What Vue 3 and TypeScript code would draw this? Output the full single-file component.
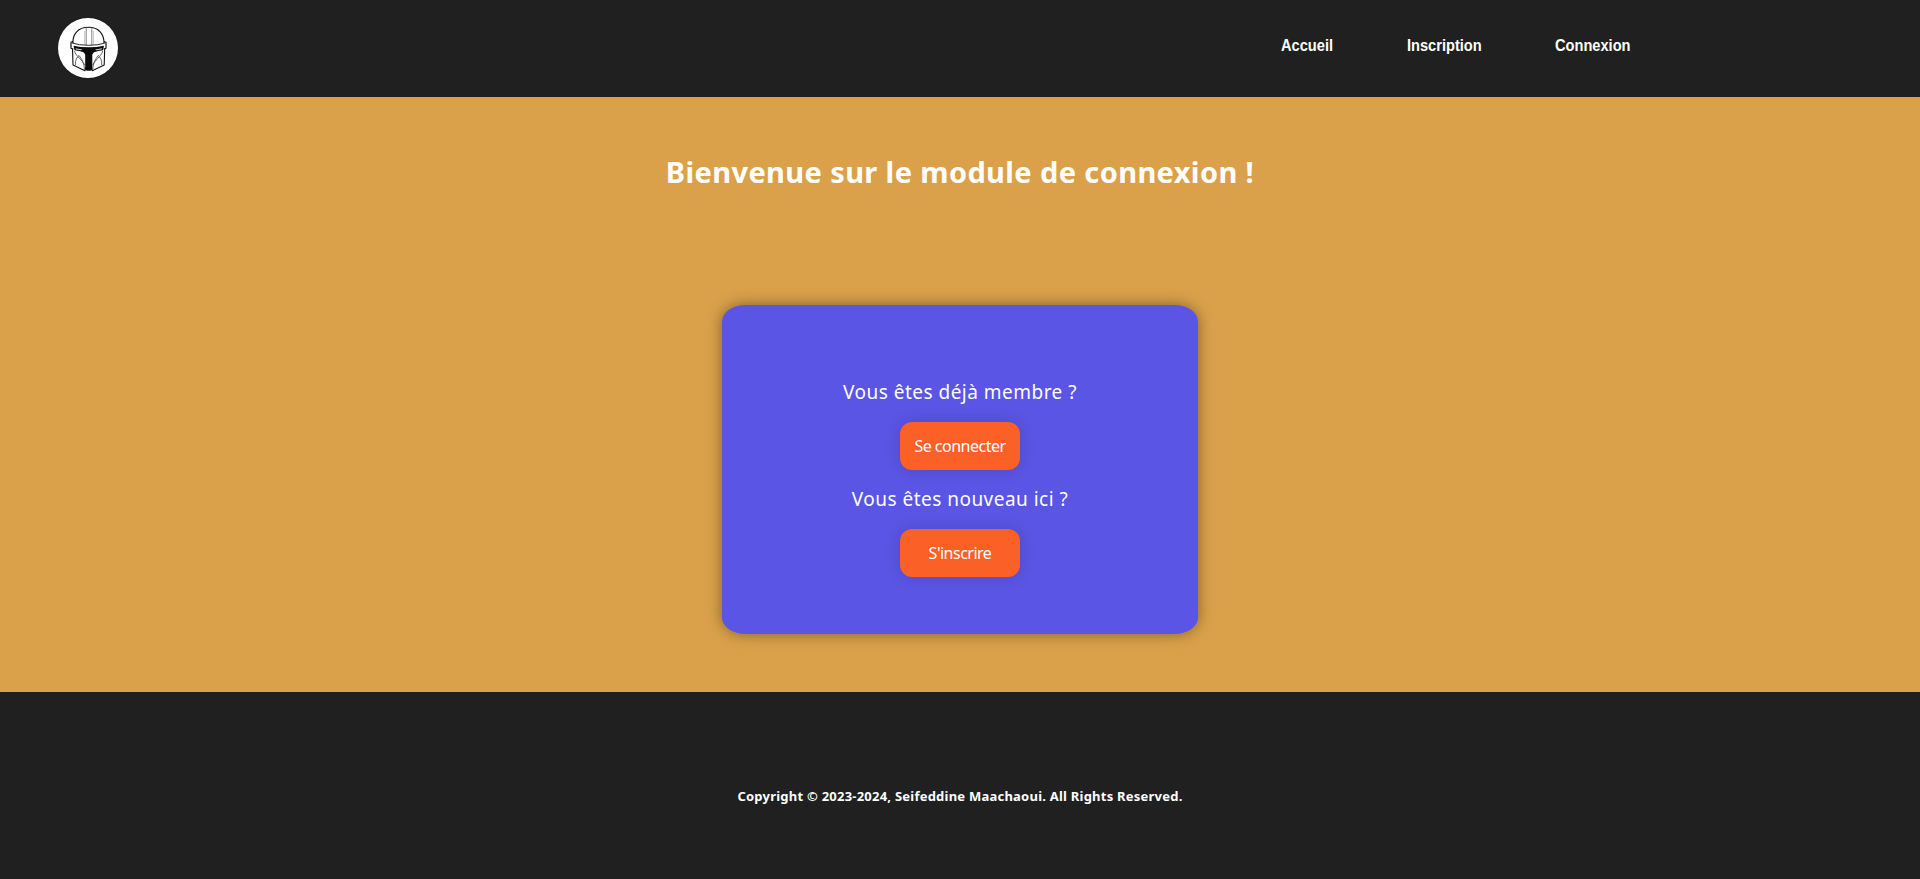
<script setup lang="ts">
interface Link {
  label: string
  cls: string
}
interface Choice {
  question: string
  action: string
}

const links: Link[] = [
  { label: 'Accueil', cls: 'home' },
  { label: 'Inscription', cls: 'register' },
  { label: 'Connexion', cls: 'login' },
]
const choices: Choice[] = [
  { question: 'Vous êtes déjà membre ?', action: 'Se connecter' },
  { question: 'Vous êtes nouveau ici ?', action: "S'inscrire" },
]
</script>

<template>
  <div class="page">
    <header class="header">
      <a class="logo" href="#" aria-label="Accueil">
        <svg viewBox="0 0 60 60" width="60" height="60">
          <circle cx="30" cy="30" r="30" fill="#fff" />
          <g fill="none" stroke="#111" stroke-width="1.1" stroke-linejoin="round">
            <path d="M15 25C14.500 16 20 9.300 30.500 9.300S46 16 46 25" />
            <path d="M28.200 9.500v17.500M33.800 9.500v17.500" stroke="#777" stroke-width="0.9" />
            <path d="M26.500 13v13M35.500 13v13" stroke="#ccc" />
            <path d="M15 23.500l-2 .8v6l2.300 1M46 23.500l2 .8v6l-2.300 1" stroke-width="1.2" />
            <path d="M14 25q7 2.300 16.700 2.300T47 25" stroke-width="0.9" />
            <path d="M14.500 30.500l.5 16.500 12 5.700.7-3M46.700 30.500l-.5 16.500-12 5.700-.7-3" />
            <path d="M16.500 33c1 4.500 5 6 10.500 14M44.700 33c-1 4.500-5 6-10 14M17.500 47c-.5-5 1.500-8 3.500-9.500 3 4 5 7 5.500 14M43.700 47c.5-5-1.500-8-3.500-9.500-3 4-5 7-5.500 14" stroke="#555" stroke-width="0.9" />
          </g>
          <path d="M15.500 27.800q7 1.500 15.200 1.500t15.300-1.500l-1 4.500q-5 .4-9 1.900l-1.700 2.300v15l-1.800 1.200h-3.600l-1.700-1.200v-15l-1.700-2.300q-4-1.500-9-1.900z" fill="#0c0c0c" />
          <path d="M17.500 30.300q4 .9 7 1.100l-1.500.8q-3-.5-5-.7zM44 30.300q-4 .9-7 1.100l1.500.8q3-.5 5-.7z" fill="#ddd" />
        </svg>
      </a>
      <nav class="nav">
        <a v-for="link in links" :key="link.label" href="#" :class="link.cls">
          <span>{{ link.label }}</span>
        </a>
      </nav>
    </header>

    <main class="main">
      <h1>Bienvenue sur le module de connexion !</h1>
      <section class="card">
        <div v-for="choice in choices" :key="choice.action" class="choice">
          <p>{{ choice.question }}</p>
          <button type="button">{{ choice.action }}</button>
        </div>
      </section>
    </main>

    <footer class="footer">
      <p>Copyright © 2023-2024, Seifeddine Maachaoui. All Rights Reserved.</p>
    </footer>
  </div>
</template>

<style>
body {
  background: #202020;
  overflow: hidden;
}
</style>

<style scoped>
.page {
  height: 879px;
  display: flex;
  flex-direction: column;
  background: #202020;
  color: #fff;
  font-family: "Noto Sans", "Open Sans", sans-serif;
}
.header {
  height: 97px;
  box-sizing: border-box;
  padding: 18px 290px 0 58px;
  display: flex;
  justify-content: space-between;
  align-items: flex-start;
}
.logo,
.logo svg {
  display: block;
}
.nav {
  display: flex;
  gap: 74px;
  padding-top: 17px;
}
.nav a {
  color: #fff;
  text-decoration: none;
  font: bold 17px/22px "Liberation Sans", Arial, sans-serif;
}
.nav span {
  display: inline-block;
  white-space: nowrap;
  transform: scaleX(0.86);
  transform-origin: left;
}
.nav .home { width: 52px; }
.nav .register { width: 74px; }
.nav .login { width: 75px; }
.main {
  height: 595px;
  background: #daa14a;
  display: flex;
  flex-direction: column;
  align-items: center;
}
h1 {
  margin: 53px 0 0;
  height: 155px;
  font-size: 29px;
  line-height: 44px;
  font-weight: 700;
  letter-spacing: 0.38px;
  white-space: nowrap;
}
.card {
  width: 476px;
  height: 329px;
  box-sizing: border-box;
  padding-top: 73px;
  border-radius: 5%;
  background: #5a55e4;
  box-shadow: 0 0 15px rgba(0, 0, 0, 0.4);
}
.choice {
  height: 107px;
  display: flex;
  flex-direction: column;
  align-items: center;
}
.choice p {
  margin: 0;
  height: 44px;
  font-size: 19px;
  line-height: 28px;
  letter-spacing: 0.48px;
  white-space: nowrap;
}
button {
  width: 120px;
  height: 48px;
  padding: 0;
  border: 0;
  border-radius: 12px;
  background: #fb6027;
  color: #fff;
  box-shadow: 0 0 15px rgba(0, 0, 0, 0.15);
  font: 16px/24px "Noto Sans", Tahoma, sans-serif;
  letter-spacing: -0.5px;
}
.footer {
  flex: 1;
  display: flex;
  justify-content: center;
}
.footer p {
  margin: 94px 0 0;
  font-size: 13px;
  line-height: 20px;
  font-weight: 700;
  letter-spacing: 0.23px;
  white-space: nowrap;
}
</style>
